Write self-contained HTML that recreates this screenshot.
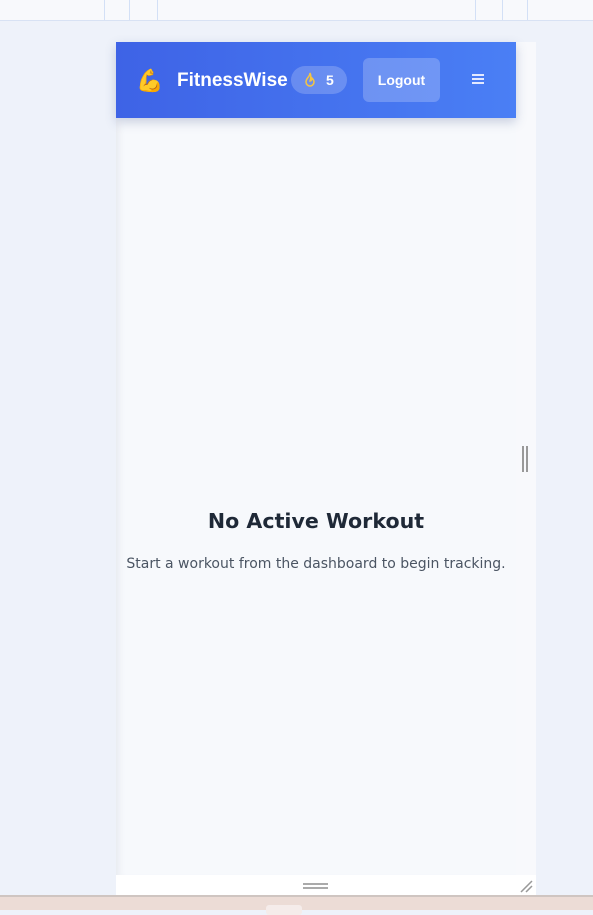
<!DOCTYPE html>
<html><head><style>
*{margin:0;padding:0;box-sizing:border-box}
body{width:593px;height:910px;background:#eef2fa;position:relative;overflow:hidden;font-family:"Liberation Sans",sans-serif}
.top{position:absolute;left:0;top:0;width:593px;height:21px;background:#f8f9fc;border-bottom:1px solid #d8e2f4}
.top i{position:absolute;top:0;width:1px;height:20px;background:#d3e0f6}
.frame{position:absolute;left:116px;top:42px;width:420px;height:853px;background:#f8f9fc}
.content{position:absolute;left:116px;top:42px;width:400px;height:833px;background:#f7f9fc;box-shadow:inset 8px 0 8px -6px #e4e7ee}
.hdr{position:absolute;left:116px;top:42px;width:400px;height:76px;background:linear-gradient(90deg,#3e63e6,#4a7ff5);box-shadow:0 4px 10px rgba(60,80,140,.25);color:#fff}
.bot{position:absolute;left:116px;top:875px;width:420px;height:20px;background:#fff}
.strip{position:absolute;left:0;top:895px;width:593px;height:15px;background:#ecdcd6;border-top:2px solid #cfc5c1}
</style></head><body>
<div class="top"><i style="left:104px"></i><i style="left:129px"></i><i style="left:157px"></i><i style="left:475px"></i><i style="left:502px"></i><i style="left:527px"></i></div>
<div class="frame"></div>
<div class="content"></div>
<div class="hdr">
<div style="position:absolute;left:20px;top:26px;font-size:22px;line-height:26px">💪</div>
<div style="position:absolute;left:61px;top:28px;font-size:19px;font-weight:bold;line-height:22px">FitnessWise</div>
<div style="position:absolute;left:175px;top:24px;width:56px;height:28px;border-radius:14px;background:rgba(255,255,255,.2)">
<svg style="position:absolute;left:13px;top:6px" width="12" height="16" viewBox="0 0 12 16"><path d="M6 1C6 5 2 6 2 10a4 4 0 0 0 8 0C10 8 9 7 8 6 8 8 7 9 6 9 7 6 7 3 6 1Z" fill="none" stroke="#f5c542" stroke-width="1.5"/></svg>
<span style="position:absolute;left:35px;top:6px;font-size:14px;font-weight:bold">5</span></div>
<div style="position:absolute;left:247px;top:16px;width:77px;height:44px;border-radius:6px;background:rgba(255,255,255,.22);font-size:14px;font-weight:bold;text-align:center;line-height:44px">Logout</div>
<div style="position:absolute;left:356px;top:32px;width:12px">
<div style="height:2px;background:#e3e9ff;margin-bottom:2px"></div><div style="height:2px;background:#e3e9ff;margin-bottom:2px"></div><div style="height:2px;background:#e3e9ff"></div></div>
</div>
<div style="position:absolute;left:116px;top:509px;width:400px;text-align:center;font-family:'DejaVu Sans',sans-serif;font-size:20.6px;font-weight:bold;color:#1f2937;white-space:nowrap">No Active Workout</div>
<div style="position:absolute;left:96px;top:556px;width:440px;text-align:center;font-family:'DejaVu Sans',sans-serif;font-size:14px;color:#4b5563;white-space:nowrap">Start a workout from the dashboard to begin tracking.</div>
<div style="position:absolute;left:522px;top:446px;width:1.5px;height:26px;background:#999"></div>
<div style="position:absolute;left:526px;top:446px;width:1.5px;height:26px;background:#999"></div>
<div class="bot"><div style="position:absolute;left:187px;top:8px;width:25px;height:2px;background:#aaa"></div><div style="position:absolute;left:187px;top:12px;width:25px;height:2px;background:#aaa"></div>
<svg style="position:absolute;left:403px;top:4px" width="14" height="14"><path d="M2 13L13 2M7 13L13 7" stroke="#999" stroke-width="1.5"/></svg></div>
<div class="strip"><div style="position:absolute;left:266px;top:8px;width:36px;height:10px;background:#f5ecea;border-radius:3px"></div></div>
</body></html>
